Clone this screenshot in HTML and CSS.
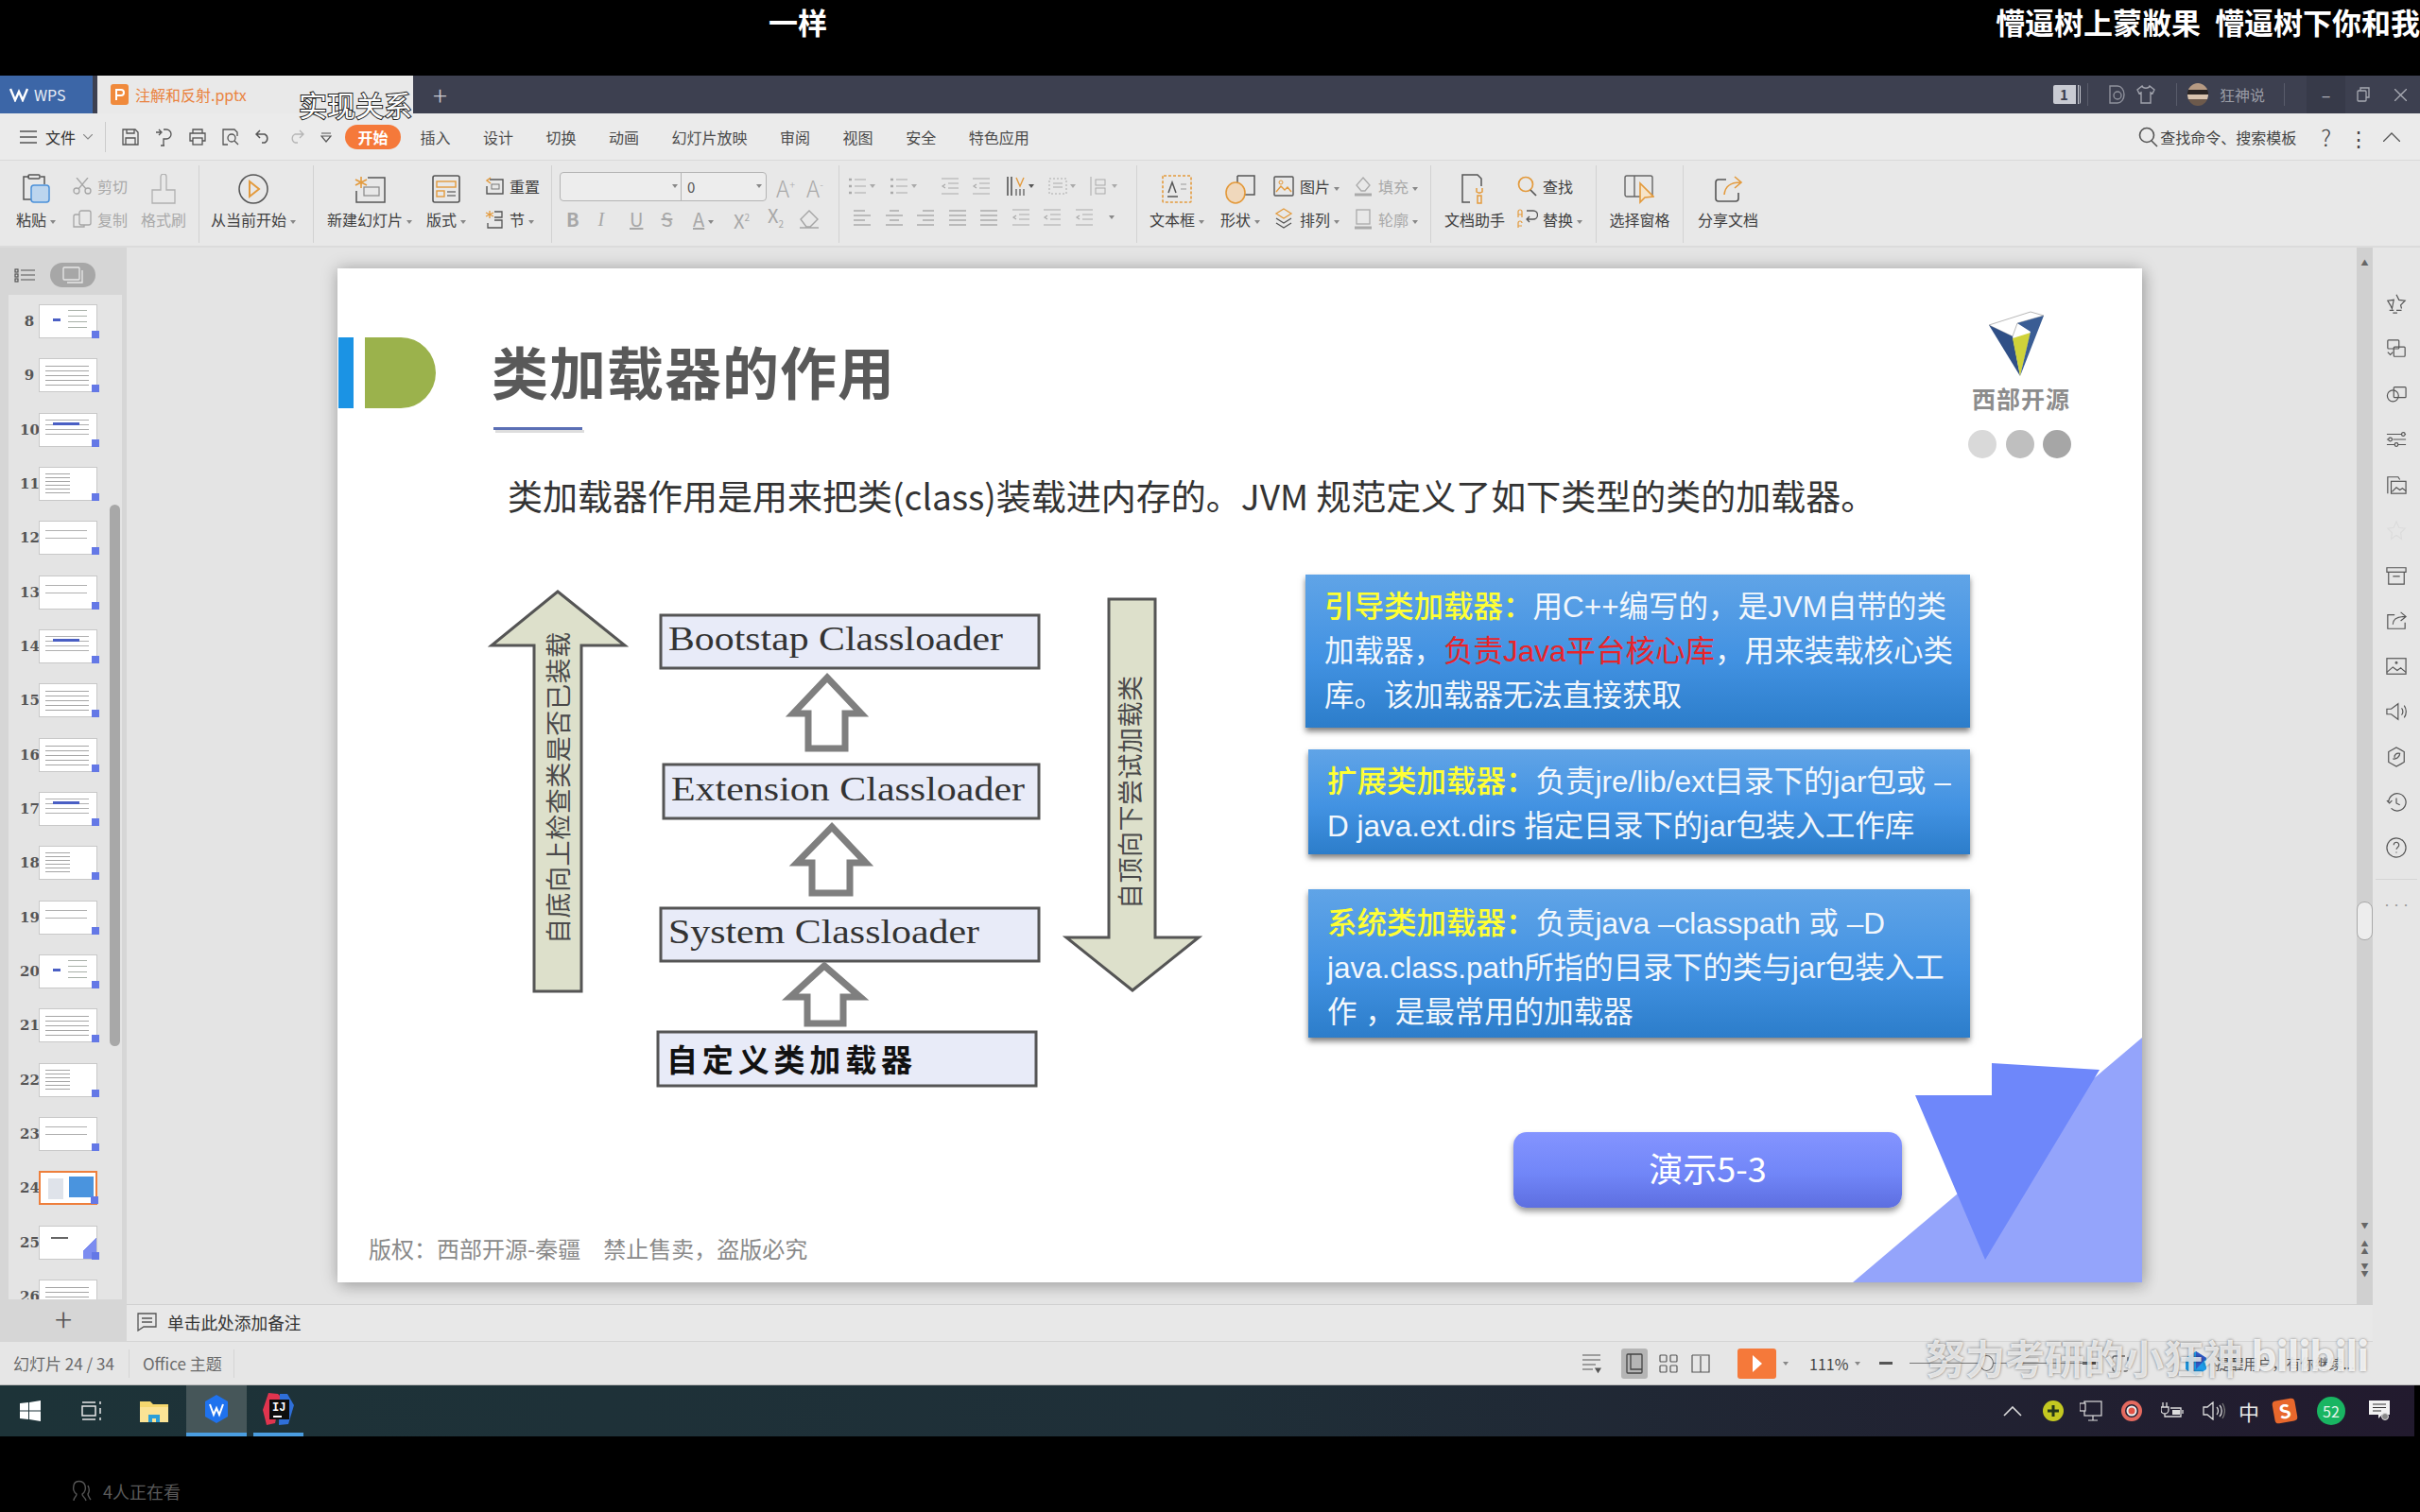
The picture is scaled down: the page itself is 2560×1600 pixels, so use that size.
FILE: index.html
```html
<!DOCTYPE html>
<html lang="zh-CN">

<head>
    <meta charset="UTF-8">
    <title>注解和反射.pptx - WPS</title>
    <link rel="stylesheet" href="styles.css">
</head>

<body>
    <div class="caption-bar">
        <span class="caption-left">一样</span>
        <span class="caption-right">懵逼树上蒙敝果 懵逼树下你和我</span>
    </div>

    <div class="tabbar">
        <div class="wps-tab">
            <svg width="20" height="16" viewBox="0 0 20 16" fill="none" stroke="#fff" stroke-width="2.4"><path d="M1 2l5 12 4-9 4 9 5-12"/></svg>
            <span>WPS</span>
        </div>
        <div class="doc-tab">
            <svg width="19" height="22" viewBox="0 0 19 22"><rect width="19" height="22" rx="3" fill="#f08a3c"/><path d="M6 17V6h5a3 3 0 010 6H6" fill="none" stroke="#fff" stroke-width="2"/></svg>
            <span>注解和反射.pptx</span>
        </div>
        <div class="add-tab">+</div>
        <div class="win-tools">
            <div class="counter"><b>1</b></div>
            <div class="win-sep sep-a"></div>
            <svg class="tool-d" width="18" height="20" viewBox="0 0 18 20" fill="none" stroke="#8f919c" stroke-width="1.4"><path d="M2 1h8a7 9 0 010 18H2z"/><circle cx="10" cy="11" r="4"/></svg>
            <svg class="tool-s" width="20" height="20" viewBox="0 0 20 20" fill="none" stroke="#a0a2ac" stroke-width="1.4"><path d="M6 1L1 5l2 4 2-1v11h10V8l2 1 2-4-5-4c-1 3-7 3-8 0z"/></svg>
            <div class="win-sep sep-b"></div>
            <div class="avatar"></div>
            <span class="user-name">狂神说</span>
            <div class="win-sep sep-c"></div>
            <div class="win-btn btn-min">&#8211;</div>
            <div class="win-btn btn-mid">
                <svg width="14" height="16" viewBox="0 0 14 16" fill="none" stroke="#a8aab3" stroke-width="1.3"><rect x="1" y="4" width="9" height="11" rx="1"/><path d="M4 4V1h9v10h-3"/></svg>
            </div>
            <div class="win-btn btn-close">
                <svg width="13" height="13" viewBox="0 0 13 13" stroke="#a8aab3" stroke-width="1.3"><path d="M0 0l13 13M13 0L0 13"/></svg>
            </div>
        </div>
    </div>
    <div class="tab-caption">实现关系</div>

    <div class="menubar">
        <svg class="burger" width="18" height="14" viewBox="0 0 18 14" stroke="#555" stroke-width="1.4"><path d="M0 1h18M0 7h18M0 13h18"/></svg>
        <span class="file-menu">文件</span>
        <svg class="chev" width="10" height="6" viewBox="0 0 10 6" fill="none" stroke="#888" stroke-width="1.2"><path d="M0 0l5 5 5-5"/></svg>
        <div class="menu-sep"></div>
        <div class="quick-tools">
            <svg width="18" height="18" viewBox="0 0 18 18" fill="none" stroke="#555" stroke-width="1.3"><path d="M1 1h13l3 3v13H1zM5 1v4h8V1M4 17v-7h10v7"/></svg>
            <svg width="18" height="20" viewBox="0 0 18 20" fill="none" stroke="#555" stroke-width="1.3"><path d="M1 5h5M4 2l3 3-3 3M9 2h3a5 5 0 010 10H9v7M6 19h4"/></svg>
            <svg width="18" height="18" viewBox="0 0 18 18" fill="none" stroke="#555" stroke-width="1.3"><path d="M4 5V1h10v4M4 13H1V5h16v8h-3"/><rect x="4" y="10" width="10" height="7"/></svg>
            <svg width="18" height="18" viewBox="0 0 18 18" fill="none" stroke="#555" stroke-width="1.3"><path d="M6 17H1V1h12l3 3v4"/><circle cx="10" cy="10" r="4"/><path d="M13 13l4 4"/></svg>
            <svg width="17" height="15" viewBox="0 0 17 15" fill="none" stroke="#555" stroke-width="1.5"><path d="M5 1L1 5l4 4M1 5h9a5 5 0 010 9H7"/></svg>
            <svg width="17" height="15" viewBox="0 0 17 15" fill="none" stroke="#b5b5b5" stroke-width="1.3"><path d="M12 1l4 4-4 4M16 5H7a5 5 0 000 9h3"/></svg>
            <svg width="12" height="12" viewBox="0 0 12 12" fill="none" stroke="#555" stroke-width="1.2"><path d="M1 2h10M1 5h10l-5 6z"/></svg>
        </div>
        <div class="menu-tabs">
            <span class="tab-on">开始</span>
            <span>插入</span>
            <span>设计</span>
            <span>切换</span>
            <span>动画</span>
            <span>幻灯片放映</span>
            <span>审阅</span>
            <span>视图</span>
            <span>安全</span>
            <span>特色应用</span>
        </div>
        <div class="menu-right">
            <svg width="22" height="22" viewBox="0 0 22 22" fill="none" stroke="#555" stroke-width="1.6"><circle cx="9" cy="9" r="7.5"/><path d="M14 15l6 6"/></svg>
            <span class="find-box">查找命令、搜索模板</span>
            <span class="help">?</span>
            <span class="more-dots">&#8942;</span>
            <svg width="18" height="10" viewBox="0 0 18 10" fill="none" stroke="#555" stroke-width="1.3"><path d="M0 10l9-9 9 9"/></svg>
        </div>
    </div>

    <div class="ribbon">
        <div class="rb-group g-clip">
            <div class="big w-paste">
                <svg width="30" height="32" viewBox="0 0 30 32" fill="none" stroke="#555" stroke-width="1.5"><path d="M8 3H2v24h8M20 3h4v8"/><rect x="7" y="1" width="12" height="4" rx="1"/><rect x="10" y="12" width="19" height="18" rx="3" fill="#bcd5ee" stroke="#4a90d9"/></svg>
                <span class="lbl">粘贴<i class="caret"></i></span>
            </div>
            <div class="stack s-cut">
                <div class="row off">
                    <svg width="20" height="18" viewBox="0 0 20 18" fill="none" stroke="#a5a5a5" stroke-width="1.3"><circle cx="4" cy="14" r="3"/><circle cx="16" cy="14" r="3"/><path d="M6 12L16 0M14 12L4 0"/></svg>
                    <span>剪切</span>
                </div>
                <div class="row off">
                    <svg width="20" height="20" viewBox="0 0 20 20" fill="none" stroke="#a5a5a5" stroke-width="1.3"><rect x="7" y="1" width="12" height="15" rx="2"/><path d="M7 5H3a2 2 0 00-2 2v11h11v-2"/></svg>
                    <span>复制</span>
                </div>
            </div>
            <div class="big w-brush off">
                <svg width="28" height="32" viewBox="0 0 28 32" fill="none" stroke="#b0b0b0" stroke-width="1.3"><path d="M11 17V3a3 3 0 016 0v14h9v14H2V17z"/></svg>
                <span class="lbl">格式刷</span>
            </div>
        </div>
        <div class="rb-group g-play">
            <div class="big w-play">
                <svg width="32" height="32" viewBox="0 0 32 32" fill="none"><ellipse cx="16" cy="16" rx="15" ry="15" stroke="#555" stroke-width="1.5"/><path d="M12 8l10 8-10 8z" stroke="#e39a3c" stroke-width="2"/></svg>
                <span class="lbl">从当前开始<i class="caret"></i></span>
            </div>
        </div>
        <div class="rb-group g-slide">
            <div class="big w-new">
                <svg width="34" height="30" viewBox="0 0 34 30" fill="none"><path d="M8 2v12M2 5l12 6M14 5L2 11" stroke="#e39a3c" stroke-width="1.6"/><path d="M15 3h18v26H3V17" stroke="#555" stroke-width="1.5"/><rect x="11" y="13" width="16" height="9" stroke="#888" stroke-width="1.2"/></svg>
                <span class="lbl">新建幻灯片<i class="caret"></i></span>
            </div>
            <div class="big w-layout">
                <svg width="30" height="30" viewBox="0 0 30 30" fill="none"><rect x="1" y="1" width="28" height="28" rx="2" stroke="#555" stroke-width="1.6"/><rect x="5" y="7" width="20" height="6" stroke="#e39a3c" stroke-width="1.4"/><rect x="5" y="17" width="8" height="6" stroke="#e39a3c" stroke-width="1.4"/><path d="M16 18h9M16 22h9" stroke="#777" stroke-width="1.4"/></svg>
                <span class="lbl">版式<i class="caret"></i></span>
            </div>
            <div class="stack s-reset">
                <div class="row">
                    <svg width="20" height="20" viewBox="0 0 20 20" fill="none"><path d="M5 3h14v15H2v-8" stroke="#555" stroke-width="1.4"/><rect x="7" y="8" width="8" height="5" stroke="#777"/><path d="M6 1L2 4l4 3" stroke="#e39a3c" stroke-width="1.5"/></svg>
                    <span>重置</span>
                </div>
                <div class="row">
                    <svg width="20" height="20" viewBox="0 0 20 20" fill="none"><path d="M5 1v8M1 3l8 4M9 3L1 7" stroke="#e39a3c" stroke-width="1.3"/><path d="M10 2h8v6h-8M10 11h8v8H3v-5" stroke="#555" stroke-width="1.3"/></svg>
                    <span>节<i class="caret"></i></span>
                </div>
            </div>
        </div>
        <div class="rb-group g-font">
            <div class="font-top">
                <div class="font-field">
                    <div class="font-name"><i class="caret"></i></div>
                    <div class="font-size"><span>0</span><i class="caret"></i></div>
                </div>
                <span class="size-up">A<sup>+</sup></span>
                <span class="size-down">A<sup>-</sup></span>
            </div>
            <div class="font-bottom">
                <span class="fb b">B</span>
                <span class="fb i">I</span>
                <span class="fb u">U</span>
                <span class="fb s">S</span>
                <span class="fb a">A<i class="caret"></i></span>
                <span class="fb x">X<sup>2</sup></span>
                <span class="fb x">X<sub>2</sub></span>
                <svg class="fb-eraser" width="22" height="20" viewBox="0 0 22 20" fill="none" stroke="#a5a5a5" stroke-width="1.4"><path d="M11 1l9 9-8 8H8L2 10zM1 19h20"/></svg>
            </div>
        </div>
        <div class="rb-group g-para">
            <div class="para-row para-top">
                <svg class="ln" viewBox="0 0 22 20"><use href="#bullets"/></svg><i class="caret"></i>
                <svg class="ln" viewBox="0 0 22 20"><use href="#bullets"/></svg><i class="caret"></i>
                <svg class="ln wide" viewBox="0 0 22 20"><use href="#indent"/></svg>
                <svg class="ln" viewBox="0 0 22 20"><use href="#indent"/></svg>
                <svg class="ln dark" width="22" height="22" viewBox="0 0 22 20"><path d="M2 0v20M6 0v20" stroke="#555" stroke-width="1.6"/><path d="M11 1l4 9 4-9" fill="none" stroke="#e39a3c" stroke-width="1.4"/><path d="M11 13v7M15 13v7M19 13v7" stroke="#555" stroke-width="1.2"/></svg><i class="caret dark-caret"></i>
                <svg class="ln" viewBox="0 0 22 20"><rect x="2" y="2" width="18" height="16" fill="none" stroke="#aaa" stroke-dasharray="2 2"/><path d="M6 7h10M6 11h10" stroke="#aaa"/></svg><i class="caret"></i>
                <svg class="ln" viewBox="0 0 22 20"><path d="M2 0v20" stroke="#aaa"/><rect x="7" y="3" width="10" height="6" fill="none" stroke="#aaa"/><rect x="7" y="12" width="10" height="6" fill="none" stroke="#aaa"/></svg><i class="caret"></i>
            </div>
            <div class="para-row para-bottom">
                <svg class="ln" viewBox="0 0 22 20"><use href="#align-l"/></svg>
                <svg class="ln" viewBox="0 0 22 20"><use href="#align-c"/></svg>
                <svg class="ln" viewBox="0 0 22 20"><use href="#align-r"/></svg>
                <svg class="ln" viewBox="0 0 22 20"><use href="#align-j"/></svg>
                <svg class="ln" viewBox="0 0 22 20"><use href="#align-j"/></svg>
                <svg class="ln" viewBox="0 0 22 20"><use href="#indent"/></svg>
                <svg class="ln" viewBox="0 0 22 20"><use href="#indent"/></svg>
                <svg class="ln" viewBox="0 0 22 20"><use href="#indent"/></svg><i class="caret"></i>
            </div>
        </div>
        <div class="rb-group g-draw">
            <div class="big w-box">
                <svg width="32" height="30" viewBox="0 0 32 30" fill="none"><rect x="1" y="1" width="30" height="28" rx="1" stroke="#e39a3c" stroke-width="1.6" stroke-dasharray="3 2"/><path d="M7 19l4-11 4 11M6 23h11" stroke="#555" stroke-width="1.5"/><path d="M20 10h6M20 15h6" stroke="#999"/></svg>
                <span class="lbl">文本框<i class="caret"></i></span>
            </div>
            <div class="big w-shape">
                <svg width="32" height="32" viewBox="0 0 32 32" fill="none"><path d="M13 2h18v20H20" stroke="#555" stroke-width="1.5"/><path d="M13 2v8" stroke="#555" stroke-width="1.5"/><ellipse cx="11" cy="20" rx="10" ry="11" fill="#f0d8bc" stroke="#e39a3c" stroke-width="1.6"/></svg>
                <span class="lbl">形状<i class="caret"></i></span>
            </div>
            <div class="stack s-pic">
                <div class="row">
                    <svg width="22" height="22" viewBox="0 0 22 22" fill="none"><rect x="1" y="1" width="20" height="20" rx="1" stroke="#555" stroke-width="1.4"/><path d="M3 17l5-6 4 4 3-3 4 5" stroke="#e39a3c" stroke-width="1.3"/><circle cx="8" cy="7" r="2" stroke="#e39a3c"/></svg>
                    <span>图片<i class="caret"></i></span>
                </div>
                <div class="row">
                    <svg width="22" height="24" viewBox="0 0 22 24" fill="none" stroke="#555" stroke-width="1.3"><path d="M11 1l8 5-8 5-8-5z" stroke="#e39a3c"/><path d="M3 11l8 5 8-5M3 16l8 5 8-5"/></svg>
                    <span>排列<i class="caret"></i></span>
                </div>
            </div>
            <div class="stack s-fill off">
                <div class="row">
                    <svg width="20" height="22" viewBox="0 0 20 22" fill="none" stroke="#aaa" stroke-width="1.3"><path d="M10 2l7 8-5 6H8l-5-6z"/><path d="M1 20h18" stroke-width="3"/></svg>
                    <span>填充<i class="caret"></i></span>
                </div>
                <div class="row">
                    <svg width="20" height="22" viewBox="0 0 20 22" fill="none" stroke="#aaa" stroke-width="1.3"><rect x="3" y="1" width="14" height="15"/><path d="M1 20h18" stroke-width="3"/></svg>
                    <span>轮廓<i class="caret"></i></span>
                </div>
            </div>
        </div>
        <div class="rb-group g-find">
            <div class="big w-help">
                <svg width="30" height="32" viewBox="0 0 30 32" fill="none"><path d="M10 30H2V1h16l4 4v8" stroke="#555" stroke-width="1.5"/><path d="M17 15v4a5 5 0 006 0v-4M18 23h4v8h-4z" stroke="#e39a3c" stroke-width="1.5"/></svg>
                <span class="lbl">文档助手</span>
            </div>
            <div class="stack s-find">
                <div class="row">
                    <svg width="22" height="22" viewBox="0 0 22 22" fill="none"><circle cx="9" cy="9" r="7.5" stroke="#e39a3c" stroke-width="1.7"/><path d="M14 15l6 6" stroke="#555" stroke-width="1.7"/></svg>
                    <span>查找</span>
                </div>
                <div class="row">
                    <svg width="22" height="22" viewBox="0 0 22 22" fill="none"><path d="M1 9V3a2 2 0 014 0v6M1 6h4M1 20v-5a2 2 0 014 0M1 18h4" stroke="#e39a3c" stroke-width="1.2"/><path d="M10 2h7a4 4 0 010 9h-6M13 8l-3 3 3 3" stroke="#555" stroke-width="1.3"/></svg>
                    <span>替换<i class="caret"></i></span>
                </div>
            </div>
        </div>
        <div class="rb-group g-pane">
            <div class="big">
                <svg width="32" height="32" viewBox="0 0 32 32" fill="none"><rect x="1" y="2" width="29" height="22" rx="2" stroke="#666" stroke-width="1.4"/><path d="M11 2v22" stroke="#666" stroke-width="1.4"/><path d="M17 10v20l5-5 9-1z" fill="#f6e4c8" stroke="#e39a3c" stroke-width="1.6"/></svg>
                <span class="lbl">选择窗格</span>
            </div>
        </div>
        <div class="rb-group g-share">
            <div class="big">
                <svg width="32" height="32" viewBox="0 0 32 32" fill="none"><path d="M14 6H6a3 3 0 00-3 3v17a3 3 0 003 3h18a3 3 0 003-3v-6" stroke="#555" stroke-width="1.6"/><path d="M12 22c1-9 6-13 17-13M23 3l7 6-7 6" stroke="#e39a3c" stroke-width="1.6"/></svg>
                <span class="lbl">分享文档</span>
            </div>
        </div>
    </div>

    <div class="workspace">
        <aside class="sidebar">
            <div class="side-head">
                <svg width="22" height="15" viewBox="0 0 22 15" fill="none" stroke="#555" stroke-width="1.2"><rect x="1" y="1" width="3" height="3"/><rect x="1" y="6" width="3" height="3"/><rect x="1" y="11" width="3" height="3"/><path d="M7 2h15M7 7h15M7 12h15"/></svg>
                <div class="view-pill">
                    <svg width="22" height="18" viewBox="0 0 22 18" fill="none" stroke="#e8e8e8" stroke-width="1.3"><rect x="1" y="1" width="17" height="13" rx="1"/><path d="M21 4v13H5"/></svg>
                </div>
            </div>
            <div class="side-list">
                <div class="side-row"><span class="num">8</span><div class="thumb t-split"></div></div>
                <div class="side-row"><span class="num">9</span><div class="thumb t-lines"></div></div>
                <div class="side-row"><span class="num">10</span><div class="thumb t-band"></div></div>
                <div class="side-row"><span class="num">11</span><div class="thumb t-short"></div></div>
                <div class="side-row"><span class="num">12</span><div class="thumb t-few"></div></div>
                <div class="side-row"><span class="num">13</span><div class="thumb t-few"></div></div>
                <div class="side-row"><span class="num">14</span><div class="thumb t-band"></div></div>
                <div class="side-row"><span class="num">15</span><div class="thumb t-lines"></div></div>
                <div class="side-row"><span class="num">16</span><div class="thumb t-lines"></div></div>
                <div class="side-row"><span class="num">17</span><div class="thumb t-band"></div></div>
                <div class="side-row"><span class="num">18</span><div class="thumb t-short"></div></div>
                <div class="side-row"><span class="num">19</span><div class="thumb t-few"></div></div>
                <div class="side-row"><span class="num">20</span><div class="thumb t-split"></div></div>
                <div class="side-row"><span class="num">21</span><div class="thumb t-lines"></div></div>
                <div class="side-row"><span class="num">22</span><div class="thumb t-short"></div></div>
                <div class="side-row"><span class="num">23</span><div class="thumb t-few"></div></div>
                <div class="side-row"><span class="num">24</span><div class="thumb t-current"></div></div>
                <div class="side-row"><span class="num">25</span><div class="thumb t-end"></div></div>
                <div class="side-row"><span class="num">26</span><div class="thumb t-lines"></div></div>
                <div class="side-scroll"></div>
            </div>
            <div class="side-add">+</div>
        </aside>

        <div class="center">
            <div class="stage">
                <div class="canvas">
                    <div class="slide">
                        <svg class="slide-art" viewBox="357 284 1909 1073">
                            <polygon points="1960,1357 2266,1098 2266,1357" fill="#94a4fb"/>
                            <polygon points="2026,1159 2107,1159 2107,1125 2221,1132 2100,1333" fill="#6e87fa"/>

                            <rect x="358" y="357" width="16" height="75" fill="#1b93e4"/>
                            <path d="M386 357h38a37 37.500 0 010 75h-38z" fill="#9bb24c"/>
                            <rect x="522" y="452" width="94" height="3" fill="#5b6fb5"/>
                            <rect x="524" y="455" width="94" height="3" fill="#dddddd"/>

                            <polygon points="2104,344 2148,330 2162,334 2134,342 2129,356" fill="#fff" stroke="#999" stroke-width="0.7"/>
                            <polygon points="2104,344 2129,356 2137,398" fill="#2f4f86"/>
                            <polygon points="2129,358 2148,352 2137,398" fill="#cfd23a"/>
                            <polygon points="2162,334 2134,342 2148,351 2137,398" fill="#3a5d94"/>
                            <text class="logo-text" x="2086" y="432" textLength="103">西部开源</text>
                            <circle cx="2097" cy="470" r="15" fill="#d9d9d9"/>
                            <circle cx="2137" cy="470" r="15" fill="#bfbfbf"/>
                            <circle cx="2176" cy="470" r="15" fill="#a6a6a6"/>

                            <polygon class="big-arrow" points="590,626 661,683 615,683 615,1049 565,1049 565,683 520,683"/>
                            <polygon class="big-arrow" points="1173,634 1222,634 1222,992 1268,992 1198,1048 1128,992 1173,992"/>
                            <text class="side-text" transform="translate(601,999) rotate(-90)" textLength="330">自底向上检查类是否已装载</text>
                            <text class="side-text" transform="translate(1206,962) rotate(-90)" textLength="247">自顶向下尝试加载类</text>

                            <rect class="cl-box" x="699" y="651" width="400" height="56"/>
                            <rect class="cl-box" x="702" y="809" width="397" height="57"/>
                            <rect class="cl-box" x="699" y="961" width="400" height="56"/>
                            <rect class="cl-box" x="696" y="1092" width="400" height="57"/>
                            <text class="cl-text" x="707" y="688" textLength="354" lengthAdjust="spacingAndGlyphs">Bootstap Classloader</text>
                            <text class="cl-text" x="710" y="847" textLength="374" lengthAdjust="spacingAndGlyphs">Extension Classloader</text>
                            <text class="cl-text" x="707" y="998" textLength="329" lengthAdjust="spacingAndGlyphs">System Classloader</text>
                            <text class="cl-cn" x="705" y="1134" textLength="260">自定义类加载器</text>

                            <polygon class="up-arrow" points="875,717 911,755 894,755 894,792 855,792 855,755 839,755"/>
                            <polygon class="up-arrow" points="880,875 916,913 899,913 899,945 859,945 859,913 843,913"/>
                            <polygon class="up-arrow" points="872,1022 910,1055 892,1055 892,1083 854,1083 854,1055 836,1055"/>
                        </svg>

                        <h1 class="slide-title">类加载器的作用</h1>
                        <p class="slide-lead">类加载器作用是用来把类(class)装载进内存的。JVM 规范定义了如下类型的类的加载器。</p>

                        <div class="note note-a">
                            <b>引导类加载器：</b>用C++编写的，是JVM自带的类<br>
                            加载器，<em>负责Java平台核心库</em>，用来装载核心类<br>
                            库。该加载器无法直接获取
                        </div>
                        <div class="note note-b">
                            <b>扩展类加载器：</b>负责jre/lib/ext目录下的jar包或 –<br>
                            D java.ext.dirs 指定目录下的jar包装入工作库
                        </div>
                        <div class="note note-c">
                            <b>系统类加载器：</b>负责java –classpath 或 –D<br>
                            java.class.path所指的目录下的类与jar包装入工<br>
                            作 ，是最常用的加载器
                        </div>

                        <div class="demo-btn">演示5-3</div>
                        <div class="slide-foot">版权：西部开源-秦疆&emsp;禁止售卖，盗版必究</div>
                    </div>
                </div>
                <div class="vscroll">
                    <i class="arr arr-top">&#9650;</i>
                    <div class="vthumb"></div>
                    <i class="arr arr-d1">&#9660;</i>
                    <i class="arr arr-d2">&#9650;<br>&#9650;</i>
                    <i class="arr arr-d3">&#9660;<br>&#9660;</i>
                </div>
            </div>
            <div class="notes">
                <svg width="21" height="20" viewBox="0 0 21 20" fill="none" stroke="#555" stroke-width="1.3"><path d="M1 1h19v14H7l-6 4zM5 6h11M5 10h11"/></svg>
                <span>单击此处添加备注</span>
            </div>
        </div>

        <aside class="right-panel">
            <div class="rp-icon"><svg viewBox="0 0 24 24"><path d="M12 2l3 6 7 1-5 5 1 4M7 18l-2-4-3-5 7-1zM4 20h5M12 20h6M8 23h5"/></svg></div>
            <div class="rp-icon"><svg viewBox="0 0 24 24"><rect x="2" y="2" width="13" height="10" rx="1"/><rect x="9" y="10" width="13" height="11" rx="1"/><path d="M2 16l3 3 3-3"/></svg></div>
            <div class="rp-icon"><svg viewBox="0 0 24 24"><rect x="9" y="4" width="14" height="12" rx="1"/><circle cx="8" cy="14" r="6.5"/></svg></div>
            <div class="rp-icon"><svg viewBox="0 0 24 24"><path d="M1 6h17M22 6h1M1 12h2M8 12h15M1 18h9M14 18h9"/><circle cx="20" cy="6" r="2"/><circle cx="5" cy="12" r="2"/><circle cx="12" cy="18" r="2"/></svg></div>
            <div class="rp-icon"><svg viewBox="0 0 24 24"><path d="M2 22V3h12l2 3"/><rect x="6" y="8" width="17" height="14"/><path d="M7 20l5-5 4 3 3-2 4 3"/></svg></div>
            <div class="rp-icon rp-faint"><svg viewBox="0 0 24 24"><path d="M12 2l3 7 7 1-5 5 1 7-6-4-6 4 1-7-5-5 7-1z"/></svg></div>
            <div class="rp-icon"><svg viewBox="0 0 24 24"><path d="M1 3h22v5H1zM3 8v14h18V8M8 13h8"/></svg></div>
            <div class="rp-icon"><svg viewBox="0 0 24 24"><path d="M10 5H2v16h20v-7M8 16c0-6 5-9 14-9M17 2l6 5-6 5"/></svg></div>
            <div class="rp-icon"><svg viewBox="0 0 24 24"><rect x="1" y="3" width="22" height="18"/><path d="M1 19l7-6 5 4 4-3 6 5"/><circle cx="12" cy="8" r="1"/></svg></div>
            <div class="rp-icon"><svg viewBox="0 0 24 24"><path d="M1 9h5l8-6v18l-8-6H1zM18 8c2 2 2 6 0 8M21 5c3 4 3 10 0 14"/></svg></div>
            <div class="rp-icon"><svg viewBox="0 0 24 24"><path d="M12 1l9 5v12l-9 5-9-5V6z"/><path d="M8 14c4 1 8-2 8-6-4-1-7 2-6 5"/></svg></div>
            <div class="rp-icon"><svg viewBox="0 0 24 24"><path d="M3 12a10 10 0 113 7M1 10l3 3 3-3M12 7v6l4 2"/></svg></div>
            <div class="rp-icon"><svg viewBox="0 0 24 24"><circle cx="12" cy="12" r="11"/><path d="M9 9a3 3 0 115 2c-1 1-2 2-2 3M12 17v1"/></svg></div>
            <div class="rp-more">&#8226;&#8226;&#8226;</div>
        </aside>
    </div>

    <div class="statusbar">
        <span class="st-item st-page">幻灯片 24 / 34</span>
        <span class="st-item st-theme">Office 主题</span>
        <div class="st-right">
            <svg class="st-notes" width="20" height="22" viewBox="0 0 20 22" fill="none" stroke="#555" stroke-width="1.2"><path d="M0 2h19M0 7h19M0 12h14M0 17h11"/><path d="M14 16h5l-2.500 4z" fill="#555"/></svg>
            <div class="view-on">
                <svg width="18" height="22" viewBox="0 0 18 22" fill="none" stroke="#444" stroke-width="1.3"><rect x="1" y="1" width="16" height="20" rx="1"/><path d="M5 1v16h12"/></svg>
            </div>
            <svg class="st-grid" width="20" height="20" viewBox="0 0 20 20" fill="none" stroke="#555" stroke-width="1.2"><rect x="1" y="1" width="7" height="7" rx="1"/><rect x="12" y="1" width="7" height="7" rx="1"/><rect x="1" y="12" width="7" height="7" rx="1"/><rect x="12" y="12" width="7" height="7" rx="1"/></svg>
            <svg class="st-book" width="20" height="20" viewBox="0 0 20 20" fill="none" stroke="#555" stroke-width="1.2"><path d="M10 2v17M1 1h9M10 1h9v18h-9M1 1v18h9"/></svg>
            <div class="play-btn"><i></i></div>
            <i class="caret st-caret"></i>
            <span class="zoom-pct">111%</span>
            <i class="caret st-caret"></i>
            <span class="zoom-minus"></span>
            <div class="zoom-slider"><i></i></div>
            <span class="zoom-plus"></span>
            <svg class="zoom-fit" width="20" height="20" viewBox="0 0 20 20" fill="none" stroke="#666" stroke-width="1.4" stroke-dasharray="4 3"><rect x="2" y="2" width="16" height="16" rx="2"/></svg>
            <svg class="tip-icon" width="24" height="26" viewBox="0 0 24 26"><path d="M12 0l11 7v12l-11 7L1 19V7z" fill="#1f9ce8"/><path d="M12 0l11 7-11 12z" fill="#3257c4"/></svg>
            <span class="tip-text">提醒用户，有你继续...</span>
        </div>
    </div>

    <div class="taskbar">
        <div class="task task-win">
            <svg width="22" height="22" viewBox="0 0 22 22" fill="#fff"><path d="M0 3l9-1v8.500H0zM10 2l12-2v10.500H10zM0 11.500h9V20l-9-1zM10 11.500h12V22l-12-2z"/></svg>
        </div>
        <div class="task task-view">
            <svg width="22" height="22" viewBox="0 0 22 22" fill="none" stroke="#e8e8e8" stroke-width="1.5"><rect x="1" y="6" width="14" height="10"/><path d="M1 2h14M1 20h14M20 1v3M20 8v6M20 18v3"/></svg>
        </div>
        <div class="task task-folder">
            <svg width="30" height="24" viewBox="0 0 30 24"><path d="M0 2h11l3 3h16v19H0z" fill="#f5d76e"/><path d="M0 8h30v16H0z" fill="#fbe395"/><path d="M9 24v-8h12v8h-4v-4h-4v4z" fill="#2b9fd8"/></svg>
        </div>
        <div class="task task-wps">
            <svg width="26" height="30" viewBox="0 0 26 30"><path d="M13 0l12 7v16l-12 7L1 23V7z" fill="#1f72ee"/><path d="M6 10l4 11 3-7 3 7 4-11" fill="none" stroke="#fff" stroke-width="2"/></svg>
        </div>
        <div class="task task-idea">
            <svg width="33" height="36" viewBox="0 0 33 36"><path d="M6 1l10 1 3 3-6 28-9 2-4-16z" fill="#e0344e"/><path d="M18 2l8 0 7 12-6 20-10 1z" fill="#2f6fd8"/><rect x="7" y="8" width="21" height="21" fill="#0d0d0d"/><path d="M11 26h9" stroke="#fff" stroke-width="2"/><text class="idea-mark" x="10" y="20">IJ</text></svg>
        </div>
        <div class="tray">
            <svg class="tr-up" width="20" height="11" viewBox="0 0 20 11" fill="none" stroke="#ddd" stroke-width="1.6"><path d="M1 10l9-9 9 9"/></svg>
            <svg class="tr-360" width="24" height="24" viewBox="0 0 24 24"><circle cx="12" cy="12" r="11" fill="#c3c821"/><path d="M12 6v12M6 12h12" stroke="#23361a" stroke-width="3"/></svg>
            <svg class="tr-net" width="24" height="22" viewBox="0 0 24 22" fill="none" stroke="#ddd" stroke-width="1.2"><rect x="5" y="1" width="18" height="15"/><rect x="0" y="3" width="6" height="8" fill="#1f1a2c"/><path d="M14 16v5M9 21h10"/></svg>
            <svg class="tr-rec" width="22" height="22" viewBox="0 0 22 22"><circle cx="11" cy="11" r="9" fill="none" stroke="#e56a5f" stroke-width="4"/><circle cx="11" cy="11" r="5.500" fill="#ededed"/><circle cx="11" cy="11" r="3.500" fill="#e25244"/></svg>
            <svg class="tr-bat" width="24" height="18" viewBox="0 0 24 18" fill="none" stroke="#ddd" stroke-width="1.3"><path d="M2 0v5M6 0v5M0 5h8v3a4 4 0 01-8 0zM4 12v3h17v-9H10"/><path d="M23 8v4"/><rect x="12" y="8" width="8" height="5" fill="#ddd" stroke="none"/></svg>
            <svg class="tr-vol" width="24" height="20" viewBox="0 0 24 20" fill="none" stroke="#ddd" stroke-width="1.3"><path d="M1 6h4l6-5v18l-6-5H1zM15 6c2 2 2 6 0 8M18 4c3 3 3 9 0 12"/><path d="M21 2c3 5 3 11 0 16" stroke="#777"/></svg>
            <span class="tr-lang">中</span>
            <div class="tr-sogou">S</div>
            <div class="tr-meter">52</div>
            <svg class="tr-msg" width="22" height="22" viewBox="0 0 22 22"><path d="M0 0h22v15H14l-4 4v-4H0z" fill="#f2f2f2"/><path d="M4 4h14M4 7.500h14M4 11h9" stroke="#333"/><circle cx="17" cy="17" r="3.500" fill="#888" stroke="#ddd"/></svg>
        </div>
    </div>

    <div class="viewers">
        <svg width="22" height="24" viewBox="0 0 22 24" fill="none" stroke="#555" stroke-width="1.4"><path d="M3 22c0-4 3-4 3-7-3-2-4-5-3-9 1-6 10-6 12 0 1 4 0 7-3 9 0 3 3 3 4 7M18 6c2 4 2 6 0 9 0 2 1 3 3 6"/></svg>
        <span>4人正在看</span>
    </div>

    <div class="watermark">努力考研的小狂神</div>
    <div class="bili-mark">bilibili</div>

    <svg class="icon-defs" width="0" height="0">
        <defs>
            <g id="bullets" fill="none" stroke="#aaa" stroke-width="1.2"><path d="M8 3h12M8 10h12M8 17h12"/><path d="M2 3h3M2 10h3M2 17h3" stroke-width="2.500"/></g>
            <g id="indent" fill="none" stroke="#aaa" stroke-width="1.2"><path d="M2 2h18M9 7h11M9 12h11M2 18h18M6 8l-3 2 3 2"/></g>
            <g id="align-l" stroke="#aaa" stroke-width="1.400"><path d="M2 3h12M2 8h18M2 13h12M2 18h18"/></g>
            <g id="align-c" stroke="#aaa" stroke-width="1.400"><path d="M6 3h10M2 8h18M6 13h10M2 18h18"/></g>
            <g id="align-r" stroke="#aaa" stroke-width="1.400"><path d="M8 3h12M2 8h18M8 13h12M2 18h18"/></g>
            <g id="align-j" stroke="#aaa" stroke-width="1.400"><path d="M2 3h18M2 8h18M2 13h18M2 18h18"/></g>
        </defs>
    </svg>
</body>

</html>
```

FILE: styles.css
```css
* {
    box-sizing: border-box;
}

html,
body {
    margin: 0;
    padding: 0;
}

body {
    position: relative;
    width: 2560px;
    height: 1600px;
    overflow: hidden;
    background-color: #000;
    font-family: "Noto Sans CJK SC", "Noto Sans", sans-serif;
    color: #444;
}

/* video captions above the app */
.caption-bar {
    display: flex;
    align-items: center;
    height: 80px;
    padding-bottom: 46px;
    padding-top: 10px;
    color: #fff;
    font-size: 31px;
    font-weight: 700;
    word-spacing: 8px;
    white-space: nowrap;
    overflow: hidden;
}

.caption-left {
    margin-left: 813px;
}

.caption-right {
    margin-left: 1236px;
}

/* title bar */
.tabbar {
    display: flex;
    align-items: center;
    height: 40px;
    background-color: #3d4050;
    color: #a8aab3;
}

.wps-tab {
    display: flex;
    align-items: center;
    gap: 6px;
    width: 98px;
    height: 40px;
    padding-left: 10px;
    background-color: #3c66a7;
    color: #e8edf5;
    font-size: 16px;
}

.doc-tab {
    display: flex;
    align-items: center;
    gap: 7px;
    width: 334px;
    height: 40px;
    margin-left: 5px;
    padding-left: 14px;
    background-color: #e9e9e9;
    color: #e9833f;
    font-size: 16px;
}

.add-tab {
    margin-left: 21px;
    color: #c9cad0;
    font-size: 28px;
    font-weight: 300;
    line-height: 40px;
}

.win-tools {
    display: flex;
    align-items: center;
    height: 40px;
    margin-left: auto;
}

.counter {
    width: 29px;
    height: 20px;
    border-right: 3px double #c5c7cf;
    background: linear-gradient(#c9cbd3, #c9cbd3) no-repeat left / 24px 100%;
    border-radius: 2px;
    color: #3d4050;
    font-size: 15px;
    line-height: 20px;
    padding-left: 7px;
}

.win-sep {
    width: 1px;
    height: 24px;
    background-color: #585b6a;
}

.sep-a {
    margin-left: 7px;
}

.tool-d {
    margin-left: 21px;
}

.tool-s {
    margin-left: 12px;
}

.sep-b {
    margin-left: 22px;
}

.avatar {
    width: 22px;
    height: 24px;
    margin-left: 11px;
    border-radius: 50%;
    background: linear-gradient(#b69a83 0 30%, #2b2523 30% 50%, #d9c3ad 50% 70%, #6d5a4c 70%);
}

.user-name {
    margin-left: 12px;
    font-size: 16px;
    color: #9a9ca5;
}

.sep-c {
    margin-left: 20px;
}

.win-btn {
    display: flex;
    align-items: center;
    justify-content: center;
    height: 40px;
}

.btn-min {
    width: 41px;
    margin-left: 23px;
    background-color: #373a49;
    font-size: 18px;
}

.btn-mid {
    width: 38px;
}

.btn-close {
    width: 41px;
}

.tab-caption {
    position: absolute;
    left: 316px;
    top: 90px;
    color: #fff;
    font-size: 30px;
    line-height: 40px;
    -webkit-text-stroke: 2px #222;
    paint-order: stroke fill;
    white-space: nowrap;
}

/* menu row */
.menubar {
    display: flex;
    align-items: center;
    height: 50px;
    border-bottom: 1px solid #d9d9d9;
    background-color: #ebebeb;
    font-size: 16px;
}

.burger {
    margin-left: 21px;
}

.file-menu {
    margin-left: 9px;
    font-size: 16px;
    color: #333;
}

.chev {
    margin-left: 8px;
}

.menu-sep {
    width: 1px;
    height: 32px;
    margin-left: 13px;
    background-color: #ccc;
}

.quick-tools {
    display: flex;
    align-items: center;
    justify-content: space-between;
    width: 226px;
    margin-left: 17px;
    padding-right: 4px;
}

.menu-tabs {
    display: flex;
    align-items: center;
    gap: 34.5px;
    margin-left: 10px;
    color: #4a4a4a;
}

.tab-on {
    width: 59px;
    height: 26px;
    margin-right: -14px;
    border-radius: 13px;
    background-color: #f5793a;
    color: #fff;
    font-weight: 700;
    line-height: 26px;
    text-align: center;
}

.menu-right {
    display: flex;
    align-items: center;
    margin-left: auto;
    padding-right: 21px;
    color: #444;
}

.find-box {
    margin-left: 1px;
}

.help {
    margin-left: 26px;
    font-size: 24px;
    font-weight: 300;
    line-height: 24px;
}

.more-dots {
    margin-left: 18px;
    font-size: 22px;
    line-height: 24px;
}

.menu-right svg:last-child {
    margin-left: 15px;
}

/* ribbon */
.ribbon {
    display: flex;
    height: 92px;
    border-bottom: 2px solid #dbdbdb;
    background-color: #e8e8e8;
    font-size: 16px;
}

.rb-group {
    display: flex;
    position: relative;
    height: 82px;
    margin-top: 5px;
    padding-top: 9px;
    border-right: 1px solid #d2d2d2;
}

.g-clip {
    width: 211px;
}

.g-play {
    width: 121px;
}

.g-slide {
    width: 252px;
}

.g-font {
    flex-direction: column;
    width: 304px;
    padding-top: 6px;
}

.g-para {
    flex-direction: column;
    width: 315px;
}

.g-draw {
    width: 311px;
}

.g-find {
    width: 175px;
}

.g-pane {
    justify-content: center;
    width: 92px;
}

.g-share {
    justify-content: center;
    width: 94px;
    border-right: none;
}

.big {
    display: flex;
    flex-direction: column;
    align-items: center;
}

.big svg {
    height: 32px;
    margin-bottom: 6px;
}

.lbl {
    color: #3f3f3f;
    line-height: 20px;
    white-space: nowrap;
}

.caret {
    display: inline-block;
    width: 0;
    height: 0;
    margin-left: 4px;
    vertical-align: middle;
    border-top: 4px solid #888;
    border-left: 3px solid transparent;
    border-right: 3px solid transparent;
}

.off,
.off .lbl {
    color: #a9a9a9;
}

.stack {
    display: flex;
    flex-direction: column;
    gap: 15px;
    padding-top: 3px;
}

.row {
    display: flex;
    align-items: center;
    gap: 6px;
    height: 20px;
    white-space: nowrap;
    color: #3f3f3f;
}

.row.off,
.off .row {
    color: #a9a9a9;
}

.w-paste {
    margin-left: 17px;
}

.s-cut {
    margin-left: 18px;
}

.w-brush {
    margin-left: 14px;
}

.w-play {
    margin-left: 12px;
}

.w-new {
    margin-left: 14px;
}

.w-layout {
    margin-left: 15px;
}

.s-reset {
    margin-left: 20px;
}

.font-top {
    display: flex;
    align-items: center;
    height: 32px;
    margin-left: 8px;
}

.font-field {
    display: flex;
    width: 219px;
    height: 31px;
    border: 1px solid #b4b4b4;
    border-radius: 4px;
    background-color: #ededed;
}

.font-name {
    display: flex;
    align-items: center;
    justify-content: flex-end;
    width: 128px;
    padding-right: 3px;
    border-right: 1px solid #b4b4b4;
}

.font-size {
    display: flex;
    align-items: center;
    flex: 1;
    padding: 0 4px 0 6px;
    color: #555;
    font-size: 15px;
}

.font-size .caret {
    margin-left: auto;
}

.size-up,
.size-down {
    color: #aaa;
    font-size: 24px;
    font-weight: 300;
    line-height: 24px;
}

.size-up {
    margin-left: 10px;
}

.size-down {
    margin-left: 12px;
}

.size-up sup,
.size-down sup {
    font-size: 11px;
}

.font-bottom {
    display: flex;
    align-items: center;
    height: 24px;
    margin-top: 7px;
    margin-left: 15px;
    color: #a7a7a7;
    font-size: 20px;
}

.fb {
    display: inline-block;
    width: 33.5px;
    line-height: 24px;
}

.fb.b {
    font-weight: 700;
}

.fb.i {
    font-family: "Liberation Serif", serif;
    font-style: italic;
}

.fb.u {
    text-decoration: underline;
}

.fb.s {
    text-decoration: line-through;
}

.fb.a {
    width: 43px;
    text-decoration: underline;
}

.fb.x {
    width: 36px;
}

.fb sup,
.fb sub {
    font-size: 10px;
}

.fb-eraser {
    margin-left: -3px;
}

.para-row {
    display: flex;
    align-items: center;
    height: 22px;
}

.para-top {
    margin-top: 2px;
    margin-left: 8px;
}

.para-bottom {
    margin-top: 11px;
    margin-left: 13px;
    gap: 11.500px;
}

.ln {
    width: 22px;
    height: 20px;
}

.para-top .caret {
    margin-left: 2px;
    margin-right: 14px;
    border-top-color: #aaa;
}

.para-top .caret:nth-of-type(2) {
    margin-right: 24px;
}

.para-top .wide {
    margin-right: 11px;
}

.para-top .ln:nth-of-type(4) {
    margin-right: 15px;
}

.para-top .dark-caret {
    border-top-color: #555;
}

.w-box {
    margin-left: 13px;
}

.w-shape {
    margin-left: 17px;
}

.s-pic {
    margin-left: 14px;
}

.s-fill {
    margin-left: 15px;
}

.s-pic .row span,
.s-fill .row span {
    min-width: 42px;
}

.w-help {
    margin-left: 14px;
}

.s-find {
    margin-left: 13px;
}

.s-find .row {
    gap: 5px;
}

/* main area */
.workspace {
    display: flex;
    height: 1158px;
    background-color: #e4e4e4;
}

.sidebar {
    display: flex;
    flex-direction: column;
    width: 134px;
    background-color: #d6d6d6;
}

.side-head {
    display: flex;
    align-items: center;
    height: 50px;
    padding-left: 15px;
    padding-top: 8px;
}

.view-pill {
    display: flex;
    align-items: center;
    justify-content: center;
    width: 48px;
    height: 26px;
    margin-left: 16px;
    border-radius: 13px;
    background-color: #a7a7a7;
}

.side-list {
    position: relative;
    display: flex;
    flex-direction: column;
    gap: 21.33px;
    height: 1063px;
    margin: 0 5px 0 9px;
    padding-top: 10px;
    overflow: hidden;
    background-color: #e4e4e4;
}

.side-row {
    display: flex;
    align-items: center;
    flex-shrink: 0;
    height: 36px;
}

.num {
    width: 20px;
    margin-left: 12px;
    color: #555;
    font-family: "DejaVu Serif", serif;
    font-size: 15px;
    font-weight: 700;
    line-height: 36px;
    text-align: center;
    white-space: nowrap;
}

.thumb {
    position: relative;
    width: 62px;
    height: 36px;
    border: 1px solid #c8c8c8;
    background-color: #fff;
    background-repeat: no-repeat;
}

.thumb::after {
    content: "";
    position: absolute;
    right: -3px;
    bottom: -1px;
    width: 8px;
    height: 8px;
    background-color: #6478e6;
}

.t-split {
    background-image: linear-gradient(#4a5fc4, #4a5fc4), repeating-linear-gradient(#a8b0a8 0 1px, #fff 1px 6px);
    background-size: 8px 3px, 20px 24px;
    background-position: 14px 14px, 30px 5px;
}

.t-lines {
    background-image: repeating-linear-gradient(#a5a5a5 0 1px, #fff 1px 5px);
    background-size: 46px 22px;
    background-position: 6px 7px;
}

.t-band {
    background-image: linear-gradient(#4a5fc4, #4a5fc4), repeating-linear-gradient(#b0b0b0 0 1px, #fff 1px 5px);
    background-size: 28px 3px, 46px 20px;
    background-position: 14px 9px, 6px 6px;
}

.t-short {
    background-image: repeating-linear-gradient(#a5a5a5 0 1px, #fff 1px 4px);
    background-size: 26px 22px;
    background-position: 6px 6px;
}

.t-few {
    background-image: repeating-linear-gradient(#b0b0b0 0 1px, #fff 1px 8px);
    background-size: 44px 14px;
    background-position: 6px 9px;
}

.t-current {
    border: 2px solid #ee7f3c;
    background-image: linear-gradient(#4a94de, #4a94de), linear-gradient(#dfe3ea, #dfe3ea);
    background-size: 26px 22px, 16px 22px;
    background-position: 30px 4px, 8px 6px;
}

.t-end {
    background-image: linear-gradient(#666, #666), linear-gradient(135deg, transparent 50%, #7c8cf0 50%);
    background-size: 18px 2px, 14px 30px;
    background-position: 12px 11px, 46px 4px;
}

.side-scroll {
    position: absolute;
    left: 107px;
    top: 222px;
    width: 11px;
    height: 573px;
    border-radius: 6px;
    background-color: #a8a8a8;
}

.side-add {
    height: 45px;
    color: #555;
    font-size: 34px;
    font-weight: 300;
    line-height: 40px;
    text-align: center;
}

.center {
    display: flex;
    flex-direction: column;
    flex: 1;
}

.stage {
    display: flex;
    height: 1118px;
}

.canvas {
    flex: 1;
    padding: 22px 0 0 223px;
    overflow: hidden;
}

.slide {
    position: relative;
    width: 1909px;
    height: 1073px;
    overflow: hidden;
    background-color: #fff;
    box-shadow: 0 0 16px rgba(0, 0, 0, 0.25), 4px 6px 14px rgba(0, 0, 0, 0.12);
}

.slide-art {
    position: absolute;
    left: 0;
    top: 0;
    width: 1909px;
    height: 1073px;
}

.slide-title {
    position: absolute;
    left: 163px;
    top: 70px;
    margin: 0;
    color: #595959;
    font-size: 60px;
    font-weight: 700;
    letter-spacing: 1px;
    line-height: 76px;
    white-space: nowrap;
}

.slide-lead {
    position: absolute;
    left: 180px;
    top: 214px;
    margin: 0;
    color: #333;
    font-size: 37px;
    line-height: 52px;
    white-space: nowrap;
}

.logo-text {
    fill: #8c8c8c;
    font-size: 25px;
    font-weight: 700;
}

.big-arrow {
    fill: #dde0cb;
    stroke: #555;
    stroke-width: 3;
}

.side-text {
    fill: #4a4a4a;
    font-size: 27px;
}

.cl-box {
    fill: #e8ebf8;
    stroke: #555;
    stroke-width: 3;
}

.cl-text {
    fill: #333;
    font-family: "Liberation Serif", serif;
    font-size: 36px;
}

.cl-cn {
    fill: #111;
    font-size: 33px;
    font-weight: 700;
}

.up-arrow {
    fill: #fff;
    stroke: #7f7f7f;
    stroke-width: 7;
}

.note {
    position: absolute;
    padding-left: 20px;
    background: linear-gradient(#60a4e7, #4292e2 55%, #2c7dca);
    box-shadow: 0 4px 6px rgba(0, 0, 0, 0.5);
    color: #f2f7fc;
    font-family: "Liberation Sans", "Noto Sans CJK SC", sans-serif;
    font-size: 31.500px;
    line-height: 47px;
    white-space: nowrap;
}

.note b {
    color: #ffff33;
    font-weight: 500;
}

.note em {
    color: #e8242a;
    font-style: normal;
}

.note-a {
    left: 1024px;
    top: 324px;
    width: 703px;
    height: 162px;
    padding-top: 11px;
}

.note-b {
    left: 1027px;
    top: 509px;
    width: 700px;
    height: 111px;
    padding-left: 20px;
    padding-top: 11px;
}

.note-c {
    left: 1027px;
    top: 657px;
    width: 700px;
    height: 157px;
    padding-top: 13px;
}

.demo-btn {
    position: absolute;
    left: 1244px;
    top: 914px;
    width: 411px;
    height: 80px;
    border-radius: 14px;
    background: linear-gradient(#8494ff, #7186f8 55%, #5d6ee0);
    box-shadow: 0 4px 6px rgba(0, 0, 0, 0.4);
    color: #fff;
    font-size: 36px;
    line-height: 75px;
    text-align: center;
}

.slide-foot {
    position: absolute;
    left: 33px;
    top: 1019px;
    color: #8a8a8a;
    font-size: 24px;
    line-height: 36px;
    white-space: nowrap;
}

.vscroll {
    position: relative;
    width: 17px;
    background-color: #d0d0d0;
}

.vthumb {
    position: absolute;
    left: 0;
    top: 692px;
    width: 17px;
    height: 41px;
    border: 1px solid #a8a8a8;
    border-radius: 8px;
    background-color: #ededed;
}

.arr {
    position: absolute;
    left: 3px;
    width: 11px;
    color: #666;
    font-size: 8px;
    font-style: normal;
    line-height: 8px;
    text-align: center;
}

.arr-top {
    top: 12px;
}

.arr-d1 {
    top: 1031px;
}

.arr-d2 {
    top: 1050px;
}

.arr-d3 {
    top: 1074px;
}

.notes {
    display: flex;
    align-items: center;
    gap: 11px;
    height: 40px;
    padding-left: 11px;
    padding-bottom: 2px;
    border-top: 1px solid #cfcfcf;
    border-bottom: 1px solid #d5d5d5;
    background-color: #e8e8e8;
    color: #333;
    font-size: 17.700px;
}

.right-panel {
    display: flex;
    flex-direction: column;
    align-items: center;
    width: 50px;
    padding-top: 35px;
    background-color: #e6e6e6;
}

.rp-icon {
    display: flex;
    align-items: center;
    justify-content: center;
    height: 48px;
}

.rp-icon svg {
    width: 22px;
    height: 22px;
    fill: none;
    stroke: #555;
    stroke-width: 1.300;
}

.rp-faint svg {
    stroke: #dcdcdc;
}

.rp-more {
    width: 44px;
    margin-top: 9px;
    padding-top: 18px;
    border-top: 1px solid #d5d5d5;
    color: #999;
    font-size: 10px;
    line-height: 18px;
    text-align: center;
}

/* status bar */
.statusbar {
    position: relative;
    display: flex;
    align-items: center;
    height: 46px;
    border-bottom: 1px solid #bbb;
    background-color: #e6e6e6;
    color: #6a6a6a;
    font-size: 17px;
}

.st-item {
    display: flex;
    align-items: center;
    height: 30px;
    border-right: 1px solid #d5d5d5;
    white-space: nowrap;
}

.st-page {
    width: 137px;
    padding-left: 14px;
}

.st-theme {
    width: 111px;
    padding-left: 14px;
}

.st-right {
    display: flex;
    align-items: center;
    margin-left: 1426px;
}

.view-on {
    display: flex;
    align-items: center;
    justify-content: center;
    width: 28px;
    height: 32px;
    margin-left: 21px;
    border-radius: 3px;
    background-color: #b5b5b5;
}

.st-grid {
    margin-left: 12px;
}

.st-book {
    margin-left: 14px;
}

.play-btn {
    display: flex;
    align-items: center;
    justify-content: center;
    width: 41px;
    height: 32px;
    margin-left: 29px;
    border-radius: 3px;
    background-color: #f5793a;
}

.play-btn i {
    width: 0;
    height: 0;
    border-left: 10px solid #fff;
    border-top: 9px solid transparent;
    border-bottom: 9px solid transparent;
}

.st-caret {
    margin-left: 7px;
}

.zoom-pct {
    margin-left: 22px;
    color: #444;
    font-size: 16px;
}

.zoom-minus {
    width: 14px;
    height: 3px;
    margin-left: 20px;
    background-color: #555;
}

.zoom-slider {
    position: relative;
    width: 190px;
    height: 1px;
    margin-left: 18px;
    background-color: #777;
}

.zoom-slider i {
    position: absolute;
    left: 74px;
    top: -8px;
    width: 15px;
    height: 17px;
    border: 1px solid #666;
    border-radius: 50%;
    background-color: #e6e6e6;
}

.zoom-plus {
    width: 14px;
    height: 3px;
    margin-left: -7px;
    background-color: #555;
}

.zoom-fit {
    margin-left: 16px;
}

.tip-icon {
    margin-left: 58px;
}

.tip-text {
    margin-left: 8px;
    color: #555;
    font-size: 15px;
    white-space: nowrap;
}

/* windows taskbar */
.taskbar {
    display: flex;
    align-items: center;
    height: 54px;
    background: linear-gradient(90deg, #1d3338, #1f2f38 50%, #221a2e);
}

.task {
    display: flex;
    align-items: center;
    justify-content: center;
    height: 54px;
}

.task-win {
    width: 64px;
}

.task-view {
    width: 65px;
}

.task-folder {
    width: 68px;
}

.task-wps {
    width: 64px;
    border-bottom: 4px solid #4a9de0;
    background-color: #465659;
}

.task-idea {
    width: 53px;
    margin-left: 7px;
    border-bottom: 4px solid #4a9de0;
}

.idea-mark {
    fill: #fff;
    font-family: "Liberation Mono", monospace;
    font-size: 12px;
    font-weight: 700;
}

.tray {
    position: relative;
    display: flex;
    align-items: center;
    margin-left: auto;
    padding-right: 26px;
    height: 54px;
    border-right: 6px solid #000;
    color: #e8e8e8;
}

.tr-360 {
    margin-left: 21px;
}

.tr-net {
    margin-left: 16px;
}

.tr-rec {
    margin-left: 20px;
}

.tr-bat {
    margin-left: 20px;
}

.tr-vol {
    margin-left: 20px;
}

.tr-lang {
    margin-left: 14px;
    font-size: 22px;
}

.tr-sogou {
    width: 24px;
    height: 24px;
    margin-left: 15px;
    border-radius: 4px;
    background-color: #e8682c;
    color: #fff;
    font-size: 20px;
    font-weight: 700;
    line-height: 24px;
    text-align: center;
    transform: rotate(-10deg);
}

.tr-meter {
    width: 30px;
    height: 30px;
    margin-left: 22px;
    border-radius: 50%;
    background-color: #19b562;
    color: #e8f5ec;
    font-size: 16px;
    line-height: 30px;
    text-align: center;
}

.tr-msg {
    margin-left: 25px;
}

.viewers {
    display: flex;
    align-items: center;
    gap: 12px;
    height: 80px;
    padding-left: 75px;
    padding-top: 36px;
    color: #5a5a5a;
    font-size: 18px;
}

/* bilibili overlay */
.watermark {
    position: absolute;
    left: 2037px;
    top: 1411px;
    color: rgba(255, 255, 255, 0.8);
    font-size: 42px;
    font-weight: 700;
    line-height: 50px;
    text-shadow: 0 0 3px rgba(0, 0, 0, 0.55);
    white-space: nowrap;
}

.bili-mark {
    position: absolute;
    left: 2382px;
    top: 1404px;
    color: rgba(255, 255, 255, 0.85);
    font-family: "Lato", sans-serif;
    font-size: 46px;
    font-weight: 900;
    line-height: 60px;
    text-shadow: 0 0 3px rgba(0, 0, 0, 0.45);
}

.icon-defs {
    position: absolute;
}
```
